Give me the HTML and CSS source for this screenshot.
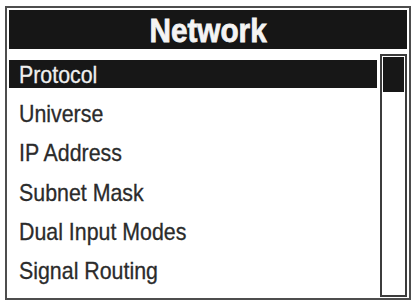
FILE: index.html
```html
<!DOCTYPE html>
<html>
<head>
<meta charset="utf-8">
<link rel="stylesheet" href="styles.css">
</head>
<body>
<div class="frame">
  <div class="header"><span class="title">Network</span></div>
  <div class="body">
    <ul class="menu">
      <li class="item selected"><div class="label"><span class="text">Protocol</span></div></li>
      <li class="item"><div class="label"><span class="text">Universe</span></div></li>
      <li class="item"><div class="label"><span class="text">IP Address</span></div></li>
      <li class="item"><div class="label"><span class="text">Subnet Mask</span></div></li>
      <li class="item"><div class="label"><span class="text">Dual Input Modes</span></div></li>
      <li class="item"><div class="label"><span class="text">Signal Routing</span></div></li>
    </ul>
    <div class="scrollbar"><div class="thumb"></div></div>
  </div>
</div>
</body>
</html>
```

FILE: styles.css
```css
html, body {
  margin: 0;
  padding: 0;
  background: #ffffff;
}

body {
  width: 415px;
  height: 301px;
  overflow: hidden;
  font-family: "Liberation Sans", Arial, sans-serif;
}

.frame {
  box-sizing: border-box;
  margin: 6px 0 0 5px;
  width: 406px;
  height: 294px;
  border: 2px solid #4d4d4d;
  padding: 2px 2px 0 2px;
  display: flex;
  flex-direction: column;
}

.header {
  box-sizing: border-box;
  height: 39px;
  padding-top: 3px;
  background: #161616;
  color: #f4f4f4;
  text-align: center;
  line-height: 36px;
  font-size: 33px;
  font-weight: bold;
}

.title {
  display: inline-block;
  transform: scaleX(0.9);
  transform-origin: center;
  -webkit-text-stroke: 0.8px #f4f4f4;
}

.body {
  margin-top: 5px;
  display: flex;
  gap: 3px;
  flex: 1;
}

.menu {
  list-style: none;
  margin: 0;
  padding: 0;
  flex: 1;
}

.item {
  box-sizing: border-box;
  height: 39.2px;
  padding-top: 6px;
}

.label {
  box-sizing: border-box;
  height: 28px;
  padding: 1px 0 0 10px;
  line-height: 27px;
  font-size: 24px;
  color: #2b2b2b;
  white-space: nowrap;
}

.text {
  display: inline-block;
  transform: scaleX(0.89);
  transform-origin: left center;
  -webkit-text-stroke: 0.3px currentColor;
}

.selected .label {
  background: #171717;
  color: #efefef;
}

.scrollbar {
  box-sizing: border-box;
  width: 27px;
  height: 243px;
  border: 2px solid #3c3c3c;
  padding: 1px;
}

.thumb {
  height: 35px;
  background: #171717;
}
```
